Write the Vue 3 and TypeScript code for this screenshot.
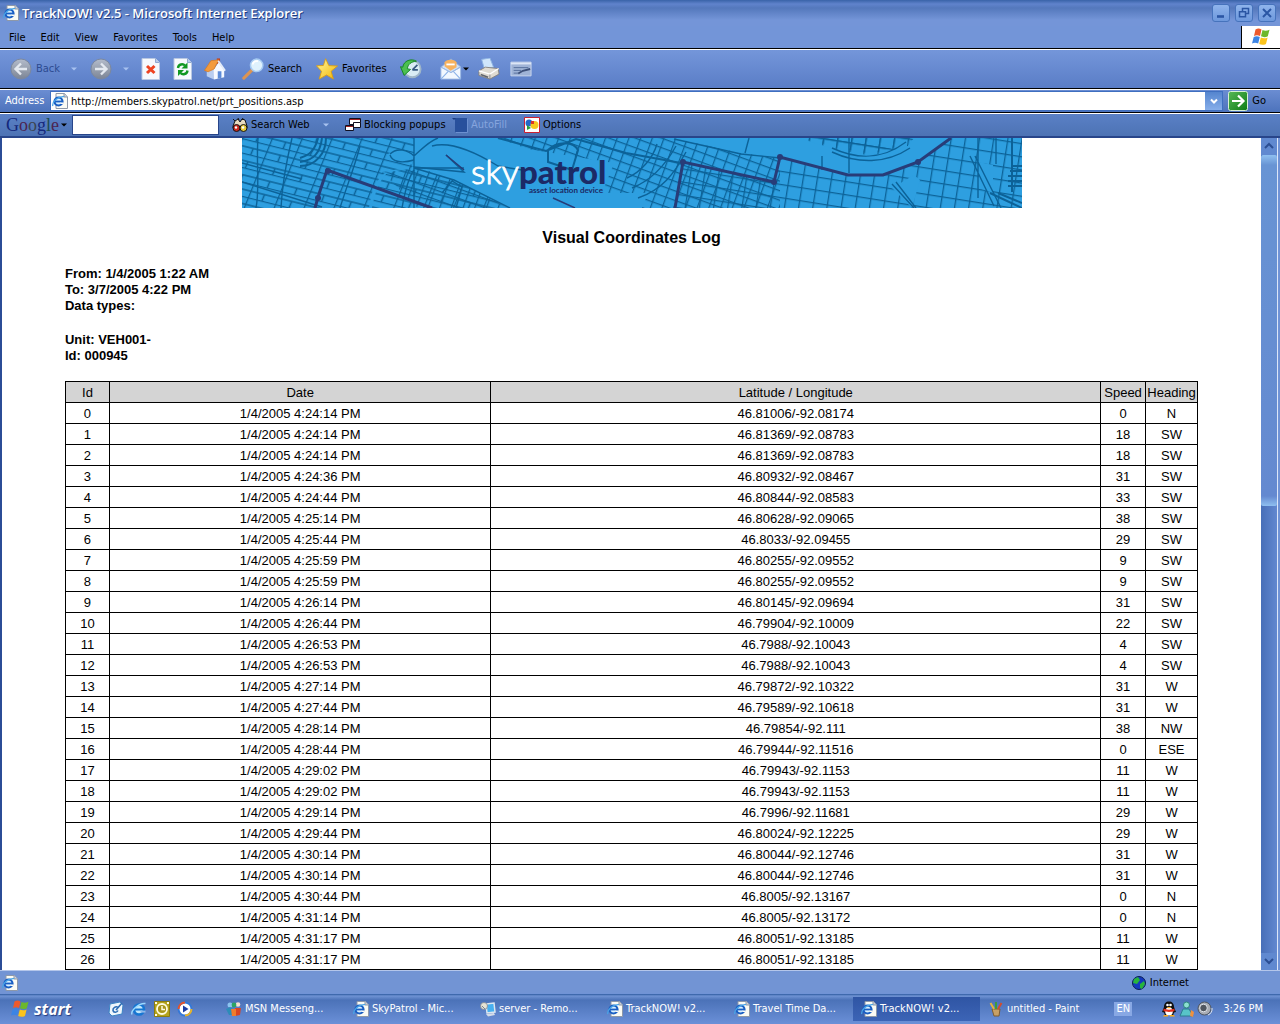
<script setup lang="ts">
interface LogRow {
  date: string
  position: string
  speed: number
  heading: string
}

const menus = ['File', 'Edit', 'View', 'Favorites', 'Tools', 'Help']

const rawRows: [string, string, number, string][] = [
  ['4:24:14', '46.81006/-92.08174', 0, 'N'],
  ['4:24:14', '46.81369/-92.08783', 18, 'SW'],
  ['4:24:14', '46.81369/-92.08783', 18, 'SW'],
  ['4:24:36', '46.80932/-92.08467', 31, 'SW'],
  ['4:24:44', '46.80844/-92.08583', 33, 'SW'],
  ['4:25:14', '46.80628/-92.09065', 38, 'SW'],
  ['4:25:44', '46.8033/-92.09455', 29, 'SW'],
  ['4:25:59', '46.80255/-92.09552', 9, 'SW'],
  ['4:25:59', '46.80255/-92.09552', 9, 'SW'],
  ['4:26:14', '46.80145/-92.09694', 31, 'SW'],
  ['4:26:44', '46.79904/-92.10009', 22, 'SW'],
  ['4:26:53', '46.7988/-92.10043', 4, 'SW'],
  ['4:26:53', '46.7988/-92.10043', 4, 'SW'],
  ['4:27:14', '46.79872/-92.10322', 31, 'W'],
  ['4:27:44', '46.79589/-92.10618', 31, 'W'],
  ['4:28:14', '46.79854/-92.111', 38, 'NW'],
  ['4:28:44', '46.79944/-92.11516', 0, 'ESE'],
  ['4:29:02', '46.79943/-92.1153', 11, 'W'],
  ['4:29:02', '46.79943/-92.1153', 11, 'W'],
  ['4:29:14', '46.7996/-92.11681', 29, 'W'],
  ['4:29:44', '46.80024/-92.12225', 29, 'W'],
  ['4:30:14', '46.80044/-92.12746', 31, 'W'],
  ['4:30:14', '46.80044/-92.12746', 31, 'W'],
  ['4:30:44', '46.8005/-92.13167', 0, 'N'],
  ['4:31:14', '46.8005/-92.13172', 0, 'N'],
  ['4:31:17', '46.80051/-92.13185', 11, 'W'],
  ['4:31:17', '46.80051/-92.13185', 11, 'W'],
]
const rows: LogRow[] = rawRows.map(([time, position, speed, heading]) => ({
  date: `1/4/2005 ${time} PM`,
  position,
  speed,
  heading,
}))

const quickLaunch = [
  { icon: 'i-desktop', label: 'Show Desktop' },
  { icon: 'i-e', label: 'Internet Explorer' },
  { icon: 'i-clock', label: 'Outlook' },
  { icon: 'i-media', label: 'Media Player' },
]

const tasks = [
  { icon: 'i-msn', label: 'MSN Messeng...', active: false },
  { icon: 'i-page', label: 'SkyPatrol - Mic...', active: false },
  { icon: 'i-remote', label: 'server - Remo...', active: false },
  { icon: 'i-page', label: 'TrackNOW! v2...', active: false },
  { icon: 'i-page', label: 'Travel Time Da...', active: false },
  { icon: 'i-page', label: 'TrackNOW! v2...', active: true },
  { icon: 'i-paint', label: 'untitled - Paint', active: false },
]
</script>

<template>
  <div class="screen">
    <svg class="sprite" aria-hidden="true">
      <defs>
        <linearGradient id="g-grey" x1="0" y1="0" x2="0" y2="1">
          <stop offset="0" stop-color="#b4bccb" /><stop offset="1" stop-color="#7c8595" />
        </linearGradient>
        <linearGradient id="g-star" x1="0" y1="0" x2="1" y2="1">
          <stop offset="0" stop-color="#fff8a0" /><stop offset="1" stop-color="#f2b400" />
        </linearGradient>
        <linearGradient id="g-go" x1="0" y1="0" x2="1" y2="1">
          <stop offset="0" stop-color="#58b858" /><stop offset="1" stop-color="#0c7c14" />
        </linearGradient>
      </defs>

      <symbol id="i-e" viewBox="0 0 16 16">
        <circle cx="8" cy="8.500" r="5" fill="#bfe6fb" stroke="#1676d2" stroke-width="2.600" />
        <path d="M4 8.500h9" stroke="#1676d2" stroke-width="2" />
        <path d="M9.500 9.600h5v2h-5z" fill="#8fb8ea" />
        <path d="M1 13.500C-.5 10 8 1.500 14.500 2.500" fill="none" stroke="#9ad8ff" stroke-width="1.500" />
      </symbol>
      <symbol id="i-page" viewBox="0 0 16 16">
        <path d="M4 .5h8.500L15.500 4v11.500H4z" fill="#fbfbf4" stroke="#8e98a8" />
        <path d="M12 .5V4h3.500" fill="#c8d0dc" stroke="#8e98a8" />
        <circle cx="6.500" cy="8.500" r="4" fill="#d8f0ff" stroke="#1a5fc4" stroke-width="2.200" />
        <path d="M3 8.500h7.500" stroke="#1a5fc4" stroke-width="1.800" />
        <path d="M8.500 9.500h3v1.500h-3z" fill="#fbfbf4" />
        <path d="M.8 13C0 9 6 3 12 3.700" fill="none" stroke="#47a4e8" stroke-width="1.300" />
      </symbol>
      <symbol id="i-back" viewBox="0 0 22 22">
        <circle cx="11" cy="11" r="10" fill="url(#g-grey)" stroke="#7c889e" />
        <path d="M17 11H6M11 5.500L5.500 11l5.500 5.500" fill="none" stroke="#e4e9f0" stroke-width="2.400" />
      </symbol>
      <symbol id="i-forward" viewBox="0 0 22 22">
        <circle cx="11" cy="11" r="10" fill="url(#g-grey)" stroke="#7c889e" />
        <path d="M5 11h11M11 5.500l5.500 5.500-5.500 5.500" fill="none" stroke="#e4e9f0" stroke-width="2.400" />
      </symbol>
      <symbol id="i-stop" viewBox="0 0 22 22">
        <path d="M2 .5h13.500l4 4v17H2z" fill="#f6f9fd" stroke="#b9c8e2" />
        <path d="M15.500 .5v4h4" fill="#b9cbe8" stroke="#8fa8d2" />
        <path d="M7 8l7.500 7M14.500 8L7 15" stroke="#ee4422" stroke-width="3" />
      </symbol>
      <symbol id="i-refresh" viewBox="0 0 22 22">
        <path d="M2 .5h13.500l4 4v17H2z" fill="#f6f9fd" stroke="#b9c8e2" />
        <path d="M15.500 .5v4h4" fill="#b9cbe8" stroke="#8fa8d2" />
        <path d="M6 10c.5-4 5-4.500 7-2.500" fill="none" stroke="#119822" stroke-width="2.400" />
        <path d="M15.500 4.500v6h-6z" fill="#119822" />
        <path d="M15.500 12.500c-.5 4-5 4.500-7 2.500" fill="none" stroke="#119822" stroke-width="2.400" />
        <path d="M6 18v-6h6z" fill="#119822" />
      </symbol>
      <symbol id="i-home" viewBox="0 0 24 24">
        <path d="M14 .5h3.500v6H14z" fill="#c03c1c" />
        <path d="M3 13v7l8 3.500V11z" fill="#b9cdf0" />
        <path d="M10.500 12.500L16 5l6 8v8l-11 2.500z" fill="#f6f9ff" />
        <path d="M.5 13.500L7.500 3 16 2 11 12 4.500 15z" fill="#f39a3c" stroke="#d97a20" stroke-width=".8" />
        <path d="M15.500 3L23 14" stroke="#e4ecf8" stroke-width="2" />
        <path d="M15 14.500h4v7l-4 1z" fill="#5c8bd8" />
      </symbol>
      <symbol id="i-search" viewBox="0 0 24 24">
        <path d="M2 22l8.500-8.500" stroke="#dc9452" stroke-width="3.400" stroke-linecap="round" />
        <circle cx="16" cy="8" r="6.800" fill="#dff2fd" stroke="#a6caf2" stroke-width="1.600" />
        <path d="M11.500 7c.8-2.500 3-4 6-3.500" fill="none" stroke="#fff" stroke-width="2" />
      </symbol>
      <symbol id="i-star" viewBox="0 0 24 24">
        <path d="M10.500 .8l3.500 7.500 9.500.4-7 5.800L19 23l-7.500-4.500L3.500 23l2.500-8.500L.5 8.500l7.500-.3z" fill="url(#g-star)" stroke="#d89c18" />
      </symbol>
      <symbol id="i-history" viewBox="0 0 24 24">
        <circle cx="13.500" cy="12" r="9" fill="#d9ecf4" stroke="#9fb6c8" stroke-width="2" />
        <path d="M13.500 13l5.500-5.500M13.500 13h6" stroke="#375880" stroke-width="1.800" />
        <path d="M18 3.500C12 0 4 3 3 10L.5 9.500 4.500 19l7-6.500-3.500-.8C8.500 7 12 4 18 3.500z" fill="#4cc050" stroke="#128022" />
      </symbol>
      <symbol id="i-mail" viewBox="0 0 24 24">
        <path d="M1 10L12 1l10.500 8.500L12 16z" fill="#cfe0f6" stroke="#90acd8" />
        <path d="M5 9V4.500C8 1 15 1 18 4.500V10l-6.500 4z" fill="#f7b25e" />
        <path d="M7 7h9" stroke="#fff" stroke-width="2" />
        <path d="M1 10l11 6 10.500-6v13H1z" fill="#f2f8ff" stroke="#9ab8e4" />
        <path d="M1 23l8-8.500M22.500 23l-8-8.500" stroke="#8cb2e8" stroke-width="1.200" />
      </symbol>
      <symbol id="i-print" viewBox="0 0 24 24">
        <path d="M7 12L4 1.500l9-1.500L17 10z" fill="#cfe6fb" stroke="#8eb4e2" />
        <path d="M1 14l7-4 14 1.500 1 6-10 5.500L1 19z" fill="#e0dcd2" stroke="#86827e" />
        <path d="M1 14l12 3.500 9.500-6" fill="none" stroke="#fff" stroke-width="1.400" />
        <path d="M13 18v5" stroke="#88888c" />
        <path d="M3 18l8 3" stroke="#62666e" stroke-width="1.500" />
      </symbol>
      <symbol id="i-edit" viewBox="0 0 24 24">
        <path d="M1 4.500h22v15H1z" fill="#9fb3d6" stroke="#cbd7ee" />
        <path d="M1 6h22" stroke="#dde6f6" stroke-width="2" />
        <path d="M4 10.500h16M4 13.500h8M4 16.500h5" stroke="#526a98" />
        <path d="M9 17l5-3 8-2" fill="none" stroke="#3c4f78" stroke-width="2" />
      </symbol>
      <symbol id="i-caret" viewBox="0 0 8 8">
        <path d="M1 2.500h6L4 5.500z" fill="currentColor" />
      </symbol>
      <symbol id="i-go" viewBox="0 0 20 20">
        <rect x=".5" y=".5" width="19" height="19" rx="2" fill="url(#g-go)" stroke="#d6efd6" />
        <path d="M4 10h11M10 4.500l5.500 5.500-5.500 5.500" fill="none" stroke="#fff" stroke-width="2.200" />
      </symbol>
      <symbol id="i-flag" viewBox="0 0 20 20">
        <path d="M4.500 2.500C7 1 8.500 1.500 10.500 2.500L9 9C7 8 5 8 3 9z" fill="#ee5a2c" />
        <path d="M11.500 3c2 1 4.500 1 7-.2l-1.700 6.500c-2.300 1.200-4.800 1-6.800 0z" fill="#6cb82c" />
        <path d="M2.700 10c2-1 4-1 6.100 0l-1.600 6.500C5 15.500 3 15.500 1 16.500z" fill="#3c84e4" />
        <path d="M9.800 10.500c2 1 4.500 1.200 6.800 0L15 17c-2.500 1.200-4.800 1-6.800 0z" fill="#fbc41c" />
      </symbol>
      <symbol id="i-binoc" viewBox="0 0 16 16">
        <path d="M1 9l2-5 3-2 2 3 2-3 3 1 2 6v2H1z" fill="#e8dcc0" stroke="#141414" />
        <circle cx="4.500" cy="11" r="3.500" fill="#c8281c" stroke="#141414" />
        <circle cx="11.500" cy="11" r="3.500" fill="#e8cc3c" stroke="#141414" />
        <path d="M1 2l2 2M6 1l1 2M11 1l-1 2" stroke="#141414" />
        <circle cx="4" cy="10.500" r="1.200" fill="#fff" /><circle cx="11" cy="10.500" r="1.200" fill="#fff" />
      </symbol>
      <symbol id="i-popups" viewBox="0 0 16 16">
        <path d="M4.500 1.500h11v6h-11z" fill="#fff" stroke="#101020" />
        <path d="M8.500 5.500h7v5h-7zM.5 8.500h8v5h-8z" fill="#fff" stroke="#101020" />
        <path d="M5 2.500h10M1 9.500h7" stroke="#a42020" />
      </symbol>
      <symbol id="i-autofill" viewBox="0 0 16 16">
        <path d="M3 1h12v14H3z" fill="#28509c" />
        <path d="M15.500 2v13.500H4" fill="none" stroke="#6c90d0" />
        <path d="M0 1h4L2 3z" fill="#1c3c80" />
      </symbol>
      <symbol id="i-options" viewBox="0 0 16 16">
        <path d="M.5 .5h15v15H.5z" fill="#fff" stroke="#cc2030" />
        <circle cx="5" cy="6" r="3.500" fill="#2468c8" /><path d="M3 8l4 3-4 2z" fill="#28a03c" />
        <circle cx="10.500" cy="8" r="4" fill="#f6c81c" /><path d="M7 4h3v3H7z" fill="#dc3424" />
      </symbol>
      <symbol id="i-globe" viewBox="0 0 16 16">
        <circle cx="8" cy="8" r="6.500" fill="#1438c0" stroke="#0a1c50" />
        <path d="M3 4l4-2 2 3-3 4-4-1zM9 9l4-3 1 3-3 5-2-1z" fill="#28b43c" />
      </symbol>
      <symbol id="i-desktop" viewBox="0 0 16 16">
        <path d="M2 3l10-2 3 3-1 9-10 2-3-3z" fill="#eef6fc" stroke="#3c84c4" />
        <path d="M10 6.500C8 4.500 4.500 7 5 9.500s4 2 5 0M8 9l6-7" fill="none" stroke="#2c6cb4" stroke-width="1.600" />
      </symbol>
      <symbol id="i-clock" viewBox="0 0 16 16">
        <path d="M.5 .5h15v15H.5z" fill="#b4a41c" stroke="#8c7c10" />
        <circle cx="8" cy="8" r="5" fill="#a89618" stroke="#fffbe0" stroke-width="1.800" />
        <path d="M8 5v3.500h3" fill="none" stroke="#fffbe0" stroke-width="1.500" />
        <path d="M1 1h2v2H1zM13 1h2v2h-2zM1 13h2v2H1z" fill="#fffbe0" />
      </symbol>
      <symbol id="i-media" viewBox="0 0 16 16">
        <circle cx="8" cy="8" r="6.500" fill="#fff" stroke="#3478d8" stroke-width="2" />
        <path d="M1.500 8A6.500 6.500 0 0 1 8 1.500" fill="none" stroke="#e4542c" stroke-width="2" />
        <path d="M14.500 8A6.500 6.500 0 0 1 8 14.500" fill="none" stroke="#e8b428" stroke-width="2" />
        <path d="M6 4.500L11.500 8 6 11.500z" fill="#1c3ca4" />
      </symbol>
      <symbol id="i-msn" viewBox="0 0 16 16">
        <circle cx="4" cy="4" r="2.500" fill="#8cc4f0" /><path d="M0 8l4-2 3 2v6H3z" fill="#2c8cb8" />
        <circle cx="12" cy="3.500" r="2.300" fill="#f2e0d0" /><path d="M9 7h6l-1 7-5 1z" fill="#d84424" />
        <circle cx="8" cy="4" r="2.400" fill="#2ca464" /><path d="M5 8h5v7H6z" fill="#f07c2c" />
      </symbol>
      <symbol id="i-remote" viewBox="0 0 16 16">
        <path d="M6 3l8-1 1 9-8 1z" fill="#48b0f0" stroke="#dce6f0" stroke-width="1.500" />
        <path d="M6 13l8-1 1 2-7 1.500z" fill="#d4dce8" />
        <circle cx="4" cy="5" r="3.500" fill="#e8e4d4" stroke="#7c8494" stroke-width=".8" />
        <path d="M2 5l3 3" stroke="#7c8494" />
      </symbol>
      <symbol id="i-paint" viewBox="0 0 16 16">
        <path d="M4 8h8l-1 7H6z" fill="#c8a064" stroke="#7c5c30" />
        <path d="M6 8L2.500 2" stroke="#e4b43c" stroke-width="2" />
        <path d="M8 8V1" stroke="#3c9c3c" stroke-width="2" />
        <path d="M10 8l3.500-6" stroke="#d44c2c" stroke-width="2" />
      </symbol>
      <symbol id="i-penguin" viewBox="0 0 16 16">
        <path d="M3 6C3 2.500 5 .5 8 .5s5 2 5 5.500l2 5-2 .5-1 3H4l-1-3L1 11z" fill="#101010" />
        <ellipse cx="8" cy="10.500" rx="3.800" ry="4" fill="#fff" />
        <circle cx="6.500" cy="4" r="1.300" fill="#fff" /><circle cx="9.500" cy="4" r="1.300" fill="#fff" />
        <path d="M5.500 6h5L8 7.500z" fill="#f8a81c" />
        <path d="M2.500 7.500c3 1.500 8 1.500 11 0v2.500c-3 1.200-8 1.200-11 0z" fill="#e03020" />
        <path d="M3 14h4v1.500H2zM9 14h4l1 1.500H9z" fill="#f8a81c" />
      </symbol>
      <symbol id="i-buddy" viewBox="0 0 16 16">
        <circle cx="7.500" cy="4" r="3" fill="#8ce0d0" stroke="#2c847c" />
        <path d="M1 15l3-7h6l4 7z" fill="#58c4c8" stroke="#2c7c90" />
        <path d="M12 9l3 2-1 5-3-1z" fill="#f09040" />
      </symbol>
      <symbol id="i-sound" viewBox="0 0 16 16">
        <circle cx="7.500" cy="7.500" r="6.500" fill="#a8acb4" stroke="#505864" />
        <circle cx="6.500" cy="7" r="3.800" fill="#50565f" stroke="#e0e4ea" />
        <path d="M11 14c3-1 4.500-4 4-7" fill="none" stroke="#e0e4ea" />
      </symbol>
    </svg>

    <header class="title-bar">
      <svg class="icon16"><use href="#i-page" /></svg>
      <h1>TrackNOW! v2.5 - Microsoft Internet Explorer</h1>
      <div class="window-buttons">
        <button type="button" aria-label="Minimize">
          <svg viewBox="0 0 16 16"><path d="M4 11.500h7" stroke="#2a56a4" stroke-width="2.600" /></svg>
        </button>
        <button type="button" aria-label="Restore">
          <svg viewBox="0 0 16 16" fill="none" stroke="#2a56a4" stroke-width="1.500"><path d="M6.500 6V3.500h6v5H10M3.500 6.800h6v5h-6z" /></svg>
        </button>
        <button type="button" aria-label="Close">
          <svg viewBox="0 0 16 16"><path d="M4 4l8 8M12 4l-8 8" stroke="#2a56a4" stroke-width="2" /></svg>
        </button>
      </div>
    </header>

    <nav class="menu-bar">
      <ul>
        <li v-for="menu in menus" :key="menu"><button type="button">{{ menu }}</button></li>
      </ul>
      <div class="throbber"><svg><use href="#i-flag" /></svg></div>
    </nav>

    <div class="toolbar">
      <button type="button" class="tool disabled"><svg><use href="#i-back" /></svg><span class="back-label">Back</span></button>
      <button type="button" class="drop disabled" aria-label="Back history"><svg><use href="#i-caret" /></svg></button>
      <button type="button" class="tool second" aria-label="Forward"><svg><use href="#i-forward" /></svg></button>
      <button type="button" class="drop disabled" aria-label="Forward history"><svg><use href="#i-caret" /></svg></button>
      <button type="button" class="tool slot32" aria-label="Stop"><svg><use href="#i-stop" /></svg></button>
      <button type="button" class="tool slot32" aria-label="Refresh"><svg><use href="#i-refresh" /></svg></button>
      <button type="button" class="tool slot38" aria-label="Home"><svg><use href="#i-home" /></svg></button>
      <button type="button" class="tool slot74"><svg><use href="#i-search" /></svg>Search</button>
      <button type="button" class="tool slot84"><svg><use href="#i-star" /></svg>Favorites</button>
      <button type="button" class="tool slot40" aria-label="History"><svg><use href="#i-history" /></svg></button>
      <button type="button" class="tool slot38 mail" aria-label="Mail"><svg><use href="#i-mail" /></svg><svg class="caret"><use href="#i-caret" /></svg></button>
      <button type="button" class="tool slot32" aria-label="Print"><svg><use href="#i-print" /></svg></button>
      <button type="button" class="tool" aria-label="Edit"><svg><use href="#i-edit" /></svg></button>
    </div>

    <form class="address-bar" @submit.prevent>
      <label for="address">Address</label>
      <div class="address-box">
        <svg class="icon16"><use href="#i-page" /></svg>
        <input id="address" type="text" value="http://members.skypatrol.net/prt_positions.asp" />
        <button type="button" class="address-drop" aria-label="Show addresses">
          <svg viewBox="0 0 16 16"><path d="M5 6.500l3 3 3-3" fill="none" stroke="#fff" stroke-width="2" /></svg>
        </button>
      </div>
      <button type="submit" class="go"><svg><use href="#i-go" /></svg>Go</button>
    </form>

    <form class="google-bar" @submit.prevent>
      <button type="button" class="google-logo">
        <span>G<i class="o-red">o</i><i class="o-olive">o</i>g<i class="l-green">l</i><i class="o-red">e</i></span>
        <svg class="caret"><use href="#i-caret" /></svg>
      </button>
      <input type="text" class="google-input" aria-label="Search terms" />
      <button type="submit" class="g-tool slot-web"><svg class="icon16"><use href="#i-binoc" /></svg>Search Web</button>
      <button type="button" class="drop disabled" aria-label="Search options"><svg><use href="#i-caret" /></svg></button>
      <button type="button" class="g-tool slot-popups"><svg class="icon16"><use href="#i-popups" /></svg>Blocking popups</button>
      <button type="button" class="g-tool slot-autofill"><svg class="icon16"><use href="#i-autofill" /></svg>AutoFill</button>
      <button type="button" class="g-tool"><svg class="icon16"><use href="#i-options" /></svg>Options</button>
    </form>

    <div class="viewport">
      <main class="report">
        <svg class="banner" viewBox="0 0 780 70" role="img" aria-label="skypatrol asset location device">
          <defs>
            <pattern id="blocks" width="28" height="14" patternUnits="userSpaceOnUse" patternTransform="rotate(14) skewX(-8)">
              <path d="M0 .5h28M0 7.500h28M.5 0v14M14.500 7v7" fill="none" stroke="#0c6298" stroke-width="1.500" />
            </pattern>
            <pattern id="grid" width="14" height="13" patternUnits="userSpaceOnUse" patternTransform="rotate(9)">
              <path d="M0 .5h14M.5 0v13" fill="none" stroke="#0c6298" stroke-width="1.600" />
            </pattern>
            <pattern id="fine" width="11" height="9" patternUnits="userSpaceOnUse" patternTransform="rotate(20)">
              <path d="M0 .5h11M.5 0v9" fill="none" stroke="#0c6298" stroke-width="1.500" />
            </pattern>
          </defs>
          <rect width="780" height="70" fill="#2e9fe0" />
          <path d="M0 0h172v30l40 12 56 28H0z" fill="url(#blocks)" />
          <path d="M140 34l38-4 34 12 54 28h-90z" fill="url(#fine)" />
          <path d="M256 0h176l67 15 39 5v50H368l-8-15 12-30-86-14z" fill="url(#fine)" />
          <path d="M441 24l91 20 6-25 68 18h35l35-13 33-24h71v70H433z" fill="url(#grid)" />
          <path d="M556 0l36 11 37 7 37-10 6-8z" fill="url(#grid)" />
          <path d="M432 0h124l36 11 37 7 37-10 6-8h37l-33 24-35 13h-35l-68-18-39-4z" fill="#2e9fe0" />
          <path d="M560 0l32 9 37 7 35-10 4-6z" fill="url(#grid)" />
          <path d="M130 70c5-25 12-34 20-38l22-2-6-8c-12 2-17 2-21-5 8-8 18-5 27-1l-2 14-27 5c-12 10-14 22-16 35z" fill="#2e9fe0" />
          <path d="M360 55h46l-6 15h-40zM737 24l14 3v28l-14-5zM650 50l22-13 6 5-8 28z" fill="#2e9fe0" />
          <g fill="none" stroke="#0c6298" stroke-width="1.400">
            <path d="M16 0c-2 25 2 50-2 70M50 0c-6 25-10 48-11 70M118 8c-5 20-14 42-20 62M0 25l60 16M0 44l80 25" />
            <path d="M84 0c0 15-10 28-26 28M80 0c-2 15-8 22-22 24M76 0c-3 12-8 17-18 20" stroke-width="2" />
            <path d="M172 0v70M148 16c7-7 18-4 24 2 8-7 15-15 24-18M148 17c2 6 10 9 24 5M172 30h50" />
            <path d="M190 8c20-6 50 10 66 20l24 4M204 17l18 17-50-5M172 30l40 12 56 28M160 70c5-30 12-38 12-38M200 55l10-12 10 6-6 21" />
            <path d="M256 0l48 13 30-12 50 14 55 10M306 12c10-10 26-8 30 0l-6 20-24-8z" stroke-width="2" />
            <path d="M390 50c20-8 34-24 44-42M396 60c24-8 36-24 48-46M385 40c14-6 26-20 30-34" />
            <path d="M432 1l67 15 39 4M503 15l4-15M580 18v14M607 0v35M590 10c26 12 50 12 74-6M590 14c26 12 54 12 78-4" />
            <path d="M728 18l24 50M733 18l26 52M736 0v60M754 0v26M650 46l22 24M654 44l20 26" />
            <path d="M770 28h10M768 33h12M766 38h14M766 43h14M766 48h14M748 55l32 15M756 55l24 10M770 0v54" stroke-width="2" />
          </g>
          <g fill="none" stroke="#283c78" stroke-width="3">
            <path d="M73 70l4-14 8-24 105 38" />
            <path d="M433 70l8-46 91 20 6-25 68 18h35l35-13 33-24" />
            <path d="M311 60l22 10M204 17l18 15" stroke-width="1.500" />
          </g>
          <g fill="#283c78">
            <circle cx="86" cy="33" r="3" /><circle cx="76" cy="60" r="3" /><circle cx="441" cy="24" r="3" />
            <circle cx="532" cy="44" r="3" /><circle cx="538" cy="19" r="3" /><circle cx="676" cy="24" r="3" />
          </g>
          <text x="229" y="46" class="logo-sky">sky</text>
          <text x="277" y="46" class="logo-patrol">patrol</text>
          <text x="287" y="55" class="logo-sub">asset location device</text>
        </svg>

        <div class="log">
          <h2>Visual Coordinates Log</h2>
          <p>From: 1/4/2005 1:22 AM<br />To: 3/7/2005 4:22 PM<br />Data types:</p>
          <p>Unit: VEH001-<br />Id: 000945</p>

          <table>
            <colgroup>
              <col class="col-id" /><col class="col-date" /><col /><col class="col-speed" /><col class="col-heading" />
            </colgroup>
            <thead>
              <tr><th>Id</th><th>Date</th><th>Latitude / Longitude</th><th>Speed</th><th>Heading</th></tr>
            </thead>
            <tbody>
              <tr v-for="(row, index) in rows" :key="index">
                <td>{{ index }}</td>
                <td>{{ row.date }}</td>
                <td>{{ row.position }}</td>
                <td>{{ row.speed }}</td>
                <td>{{ row.heading }}</td>
              </tr>
            </tbody>
          </table>
        </div>
      </main>
      <div class="scrollbar" aria-hidden="true">
        <div class="scroll-arrow"><svg viewBox="0 0 16 16"><path d="M4 10l4-4 4 4" fill="none" stroke="#2c4f94" stroke-width="2" /></svg></div>
        <div class="scroll-track"><div class="scroll-thumb"></div></div>
        <div class="scroll-arrow"><svg viewBox="0 0 16 16"><path d="M4 6l4 4 4-4" fill="none" stroke="#2c4f94" stroke-width="2" /></svg></div>
      </div>
    </div>

    <footer class="status-bar">
      <svg class="icon16"><use href="#i-page" /></svg>
      <div class="zone"><svg class="icon16"><use href="#i-globe" /></svg>Internet</div>
    </footer>

    <div class="taskbar">
      <button type="button" class="start"><svg><use href="#i-flag" /></svg>start</button>
      <div class="quick">
        <button v-for="item in quickLaunch" :key="item.label" type="button" :aria-label="item.label">
          <svg class="icon16"><use :href="`#${item.icon}`" /></svg>
        </button>
      </div>
      <div class="tasks">
        <button v-for="(task, index) in tasks" :key="index" type="button" class="task" :class="{ active: task.active }">
          <svg class="icon16"><use :href="`#${task.icon}`" /></svg><span>{{ task.label }}</span>
        </button>
      </div>
      <div class="tray">
        <span class="lang">EN</span>
        <div class="tray-icons">
          <svg class="icon16"><use href="#i-penguin" /></svg>
          <svg class="icon16"><use href="#i-buddy" /></svg>
          <svg class="icon16"><use href="#i-sound" /></svg>
        </div>
        <time>3:26 PM</time>
      </div>
    </div>
  </div>
</template>

<style>
body {
  margin: 0;
  overflow: hidden;
}
</style>

<style scoped>
.screen {
  display: flex;
  flex-direction: column;
  height: 100vh;
  font: 11px/14px "DejaVu Sans Condensed", "Noto Sans", sans-serif;
  color: #000;
  background: #7093d6;
}
.sprite {
  position: absolute;
  width: 0;
  height: 0;
}
button {
  display: flex;
  align-items: center;
  padding: 0;
  border: 0;
  background: none;
  font: inherit;
  color: inherit;
  white-space: nowrap;
}
svg {
  display: block;
  flex: none;
}
.icon16 {
  width: 16px;
  height: 16px;
}

.title-bar {
  display: flex;
  flex: none;
  align-items: center;
  height: 26px;
  padding: 0 4px 0 3px;
  background: linear-gradient(#3963a8 0, #6083cc 4px, #5478bc 8px, #7495d8 20px, #7495d8);
}
.title-bar h1 {
  flex: 1;
  margin: 0 0 0 3px;
  font: 600 13px/18px "Open Sans", sans-serif;
  color: #fff;
  text-shadow: 1px 1px #1f3c80;
}
.window-buttons {
  display: flex;
  gap: 5px;
}
.window-buttons button {
  justify-content: center;
  width: 18px;
  height: 18px;
  border: 1px solid #4673bc;
  border-radius: 3px;
  background: linear-gradient(#8fb4ec, #6d98dc);
}
.window-buttons svg {
  width: 16px;
  height: 16px;
}

.menu-bar {
  display: flex;
  flex: none;
  justify-content: space-between;
  height: 22px;
  border-bottom: 1px solid #000;
  background: #7395d8;
}
.menu-bar ul {
  display: flex;
  align-items: center;
  gap: 15px;
  margin: 0;
  padding: 2px 0 0 9px;
  list-style: none;
}
.throbber {
  display: flex;
  align-items: center;
  justify-content: center;
  width: 38px;
  border-left: 1px solid #000;
  background: #fff;
}
.throbber svg {
  width: 20px;
  height: 20px;
}

.toolbar {
  display: flex;
  flex: none;
  align-items: center;
  height: 38px;
  padding-left: 10px;
  border-top: 1px solid #fff;
  border-bottom: 1px solid #000;
  background: linear-gradient(#7496da, #5a7dc6);
}
.tool {
  gap: 4px;
}
.tool svg {
  width: 22px;
  height: 22px;
}
.disabled {
  color: #2d4b91;
}
.back-label {
  width: 24px;
}
.drop {
  justify-content: center;
  width: 28px;
}
.drop.disabled {
  color: #a8c2f0;
}
.drop svg,
.tool .caret,
.caret {
  width: 8px;
  height: 8px;
}
.second {
  margin-left: 2px;
}
.slot32 {
  width: 32px;
}
.slot38 {
  width: 38px;
}
.slot40 {
  width: 40px;
}
.slot74 {
  width: 74px;
}
.slot84 {
  width: 84px;
}
.mail {
  gap: 0;
}

.address-bar {
  display: flex;
  flex: none;
  align-items: center;
  height: 22px;
  padding: 0 14px 0 5px;
  border-top: 1px solid #fff;
  border-bottom: 1px solid #000;
  background: linear-gradient(#6b8dd2, #4d73bc);
}
.address-bar label {
  width: 45px;
  color: #fff;
}
.address-box {
  display: flex;
  flex: 1;
  align-items: center;
  height: 20px;
  padding-left: 1px;
  box-sizing: border-box;
  border: 1px solid #3f6fc0;
  background: #fff;
}
.address-box input {
  flex: 1;
  min-width: 0;
  margin: 0;
  padding: 2px 3px 0;
  border: 0;
  background: none;
  font: inherit;
}
.address-drop {
  justify-content: center;
  width: 17px;
  height: 18px;
  background: linear-gradient(#5585cf, #86aeea);
}
.address-drop svg {
  width: 16px;
  height: 16px;
}
.go {
  gap: 4px;
  margin-left: 5px;
}
.go svg {
  width: 20px;
  height: 20px;
}

.google-bar {
  display: flex;
  flex: none;
  align-items: center;
  height: 22px;
  padding-left: 6px;
  border-top: 1px solid #fff;
  border-bottom: 2px solid #28458a;
  background: linear-gradient(#5a80c6, #4d73b4);
}
.google-logo {
  gap: 1px;
  width: 66px;
  font: 18px/20px "Liberation Serif", serif;
  color: #14287c;
}
.google-logo i {
  font-style: normal;
}
.o-red {
  color: #4c2450;
}
.o-olive {
  color: #3c4450;
}
.l-green {
  color: #1c4c50;
}
.google-logo .caret {
  color: #000;
}
.google-input {
  width: 147px;
  height: 20px;
  margin: 0 13px 0 0;
  padding: 0 2px;
  box-sizing: border-box;
  border: 1px solid #28458a;
  background: #fff;
  font: inherit;
}
.g-tool {
  gap: 3px;
}
.slot-web {
  width: 80px;
}
.slot-popups {
  width: 107px;
  margin-left: 5px;
}
.slot-autofill {
  width: 72px;
  color: #86a5de;
}

.viewport {
  display: flex;
  flex: 1;
  min-height: 0;
  border-left: 2px solid #2b4c96;
}
.report {
  flex: 1;
  min-width: 0;
  overflow: hidden;
  background: #fff;
  font-family: "Liberation Sans", Arial, sans-serif;
}
.log {
  width: 90%;
  margin: 0 auto;
}
.banner {
  width: 780px;
  max-width: 100%;
  margin: 0 auto;
}
.logo-sky,
.logo-patrol {
  font: 300 34px "Lato", sans-serif;
  fill: #fff;
  stroke: #fff;
  stroke-width: 1px;
}
.logo-patrol {
  font-weight: 900;
  font-size: 33px;
  fill: #1c2a66;
  stroke: none;
}
.logo-sub {
  font: bold 8px "Lato", sans-serif;
  fill: #1c2a66;
}
.report h2 {
  margin: 21px 0 19px;
  font-size: 16px;
  line-height: 18px;
  text-align: center;
}
.report p {
  margin: 0 0 18px;
  font-weight: bold;
  font-size: 13px;
  line-height: 16px;
}
.report p:last-of-type {
  margin-bottom: 17px;
}
.report table {
  width: 100%;
  table-layout: fixed;
  border-collapse: collapse;
  font-size: 13px;
  line-height: 18px;
  text-align: center;
}
.report th,
.report td {
  padding: 2px 0 0;
  border: 1px solid #000;
  font-weight: normal;
}
.report th {
  background: #d4d4d4;
}
.col-id {
  width: 44px;
}
.col-date {
  width: 33.7%;
}
.col-speed {
  width: 45px;
}
.col-heading {
  width: 52px;
}

.scrollbar {
  display: flex;
  flex: none;
  flex-direction: column;
  width: 16px;
  border-right: 1px solid #dce6f8;
  margin-right: 2px;
  background: #4a74c0;
}
.scroll-arrow {
  height: 17px;
  background: #6089d0;
}
.scroll-arrow svg {
  width: 16px;
  height: 16px;
}
.scroll-track {
  flex: 1;
  background: linear-gradient(90deg, #486fb8, #6288d0);
}
.scroll-thumb {
  height: 44%;
  border-radius: 2px;
  background: linear-gradient(#8fc0f0, #6894d4 10px, #6489d0 calc(100% - 10px), #8fc0f0);
}

.status-bar {
  display: flex;
  flex: none;
  align-items: center;
  justify-content: space-between;
  height: 23px;
  padding: 2px 91px 0 2px;
  box-sizing: border-box;
  border-top: 1px solid #b4c6ea;
  margin-bottom: 1px;
  background: #7294d4;
}
.zone {
  display: flex;
  align-items: center;
  gap: 3px;
}

.taskbar {
  display: flex;
  flex: none;
  align-items: center;
  height: 30px;
  padding: 0 17px 0 10px;
  background: linear-gradient(#2f5ca0 0, #6f93d4 2px, #4b72b8 6px, #6b90d8);
  color: #fff;
}
.start {
  gap: 4px;
  width: 98px;
  font: italic bold 16px/20px "Open Sans", sans-serif;
  text-shadow: 1px 1px 1px #1f3c80;
}
.start svg {
  width: 20px;
  height: 20px;
}
.quick {
  display: flex;
  gap: 7px;
  width: 110px;
}
.tasks {
  display: flex;
  flex: 1;
  min-width: 0;
}
.task {
  flex: 0 1 127px;
  gap: 3px;
  min-width: 0;
  height: 24px;
  padding-left: 8px;
  box-sizing: border-box;
}
.task.active {
  background: linear-gradient(#2f55a4, #3c64b6);
}
.tray {
  display: flex;
  align-items: center;
}
.lang {
  padding: 0 2px;
  margin-right: 29px;
  background: #88a8e4;
}
.tray-icons {
  display: flex;
  gap: 2px;
  margin-right: 10px;
}
</style>
